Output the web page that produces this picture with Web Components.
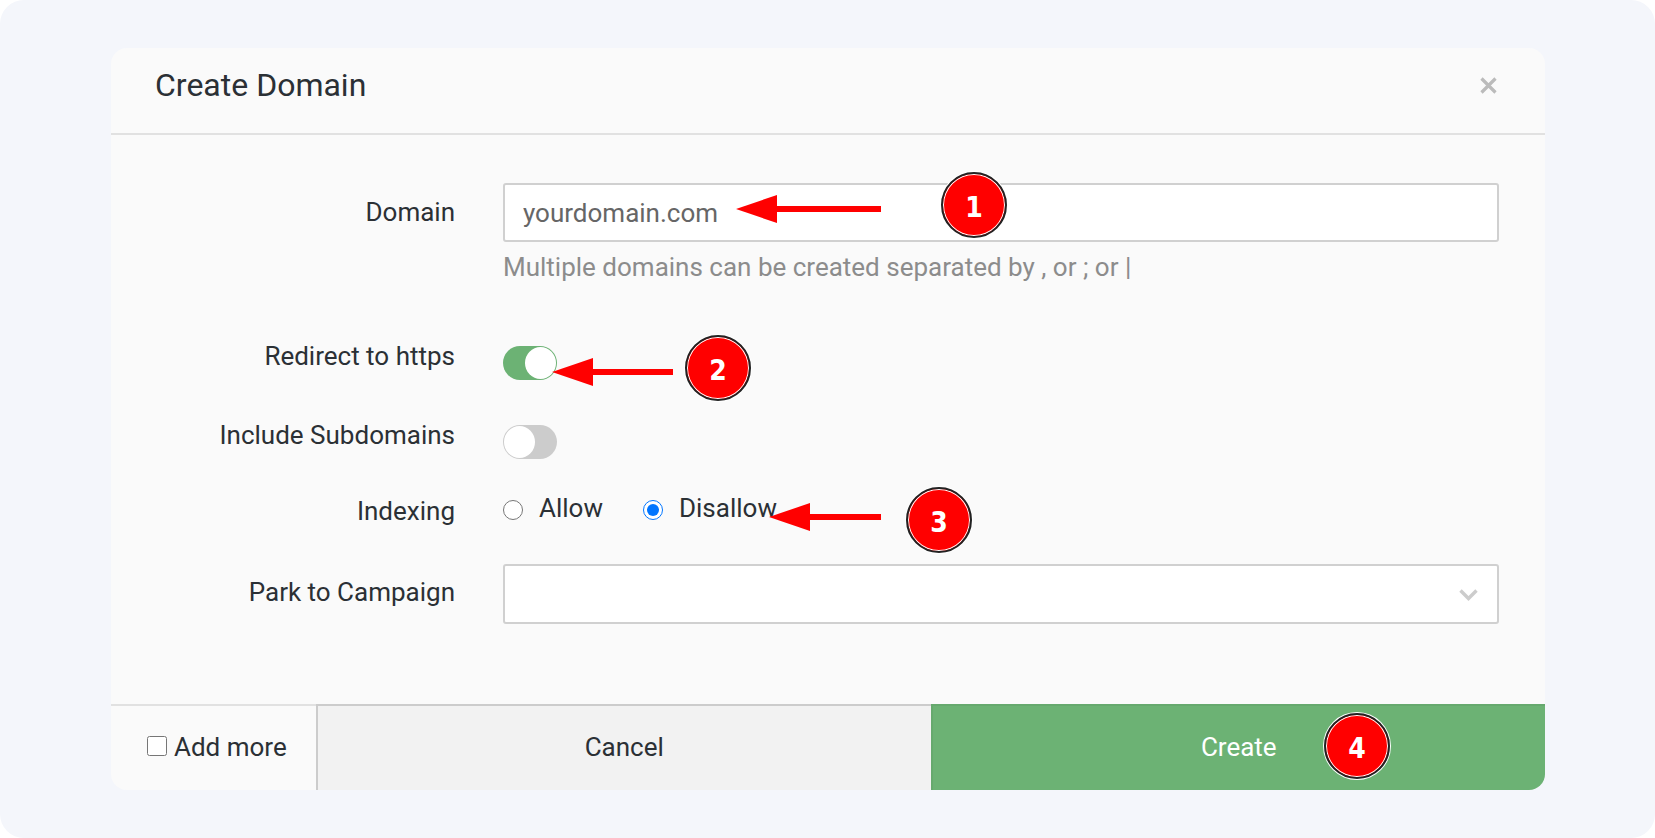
<!DOCTYPE html>
<html lang="en">
<head>
<meta charset="utf-8">
<meta name="viewport" content="width=device-width, initial-scale=1">
<title>Create Domain</title>
<style>
  body {
    margin: 0;
    background: #fff;
    color: #2b3035;
    font: 26px/28px Roboto, sans-serif;
  }
</style>
</head>
<body>
<domain-page></domain-page>

<script>
const define = (name, html) => {
  const template = document.createElement('template');
  template.innerHTML = html;

  customElements.define(name, class extends HTMLElement {
    constructor() {
      super();
      this.attachShadow({ mode: 'open' }).append(template.content.cloneNode(true));
    }
  });
};

define('callout-badge', `
  <style>
    :host {
      position: absolute;
      z-index: 2;
      display: flex;
      align-items: center;
      justify-content: center;
      box-sizing: border-box;
      width: 66px;
      height: 66px;
      padding-top: 5px;
      border: 2px solid #222;
      border-radius: 50%;
      background: #f00;
      box-shadow: inset 0 0 0 1px #fff, 0 0 0 1px #fff;
      color: #fff;
      font: bold 28px/28px "DejaVu Sans Condensed", "DejaVu Sans", sans-serif;
      pointer-events: none;
    }
  </style>
  <slot></slot>
`);

define('callout-arrow', `
  <style>
    :host {
      position: absolute;
      z-index: 2;
      display: flex;
      align-items: center;
      height: 28px;
      pointer-events: none;
    }
    svg { flex: none; width: 41px; height: 28px; }
    .line { flex: 1; height: 6px; background: #f00; }
  </style>
  <svg viewBox="0 0 41 28" aria-hidden="true"><path d="M0 14 41 0v28z" fill="#f00"/></svg>
  <div class="line"></div>
`);

define('modal-dialog', `
  <style>
    :host {
      display: flex;
      flex-direction: column;
      overflow: hidden;
      border-radius: 16px;
      background: #fafafa;
    }
    header {
      display: flex;
      align-items: flex-start;
      justify-content: space-between;
      padding: 19px 48px 30px 44px;
      border-bottom: 2px solid #e1e1e1;
    }
    .close {
      display: flex;
      margin: 10px 0 0;
      padding: 0;
      border: 0;
      background: none;
      cursor: pointer;
    }
    .body { padding: 48px 46px 80px 0; }
    footer { display: flex; }
  </style>
  <header>
    <slot name="title"></slot>
    <button class="close" type="button" aria-label="Close">
      <svg width="17" height="17" viewBox="0 0 17 17" aria-hidden="true">
        <path d="M1.5 1.5l14 14M15.5 1.5l-14 14" stroke="#bbb" stroke-width="3.2"/>
      </svg>
    </button>
  </header>
  <div class="body"><slot></slot></div>
  <footer><slot name="footer"></slot></footer>
`);

define('form-row', `
  <style>
    :host {
      display: grid;
      grid-template-columns: 344px 1fr;
      column-gap: 48px;
    }
    .label { padding-top: var(--label-top, 0); text-align: right; }
    .control { position: relative; min-width: 0; }
  </style>
  <div class="label"><slot name="label"></slot></div>
  <div class="control"><slot></slot></div>
`);

define('domain-page', `
  <style>
    :host {
      display: block;
      box-sizing: border-box;
      min-height: 100vh;
      padding: 48px 110px 48px 111px;
      border-radius: 24px;
      background: #f4f6fb;
    }
    h1 { margin: 0; font-size: 32px; line-height: 36px; font-weight: 400; }
    input { margin: 0; }

    .text, select {
      display: block;
      box-sizing: border-box;
      width: 100%;
      height: 60px;
      padding: 0 18px;
      border: 2px solid #d0d0d0;
      border-radius: 3px;
      background: #fff;
      color: #666;
      font: inherit;
      appearance: none;
    }
    .text { height: 59px; }
    .hint { margin: 11px 0 0; color: #8c8c8c; }
    .chevron { position: absolute; right: 21px; top: 25px; pointer-events: none; }

    .tall { --label-top: 15px; }
    .https { margin-top: 61px; }
    .subdomains { margin-top: 41px; }
    .indexing { --label-top: 3px; margin-top: 35px; }
    .park { --label-top: 14px; margin-top: 39px; }

    .toggle {
      display: block;
      width: 54px;
      height: 34px;
      margin-top: 4px;
      border-radius: 17px;
      background: #ccc;
      appearance: none;
      cursor: pointer;
    }
    .toggle::before {
      content: "";
      display: block;
      width: 31px;
      height: 32px;
      margin: 1px;
      border-radius: 50%;
      background: #fff;
      float: left;
    }
    .toggle:checked { background: #6cb274; }
    .toggle:checked::before { float: right; }

    .options { display: flex; gap: 40px; }
    .options label { display: flex; gap: 16px; }
    .options input { width: 20px; height: 20px; margin-top: 6px; }

    .more {
      display: flex;
      align-items: center;
      gap: 7px;
      box-sizing: border-box;
      width: 205px;
      padding: 0 0 3px 36px;
      border-top: 2px solid #e1e1e1;
    }
    .more input { width: 20px; height: 20px; margin-bottom: 2px; }
    .action {
      position: relative;
      flex: 1;
      height: 86px;
      padding: 0 0 3px;
      border: 0 solid #ccc;
      border-width: 2px 0 0 2px;
      background: #f2f2f2;
      color: inherit;
      font: inherit;
      cursor: pointer;
    }
    .create { border-color: #66a96e; background: #6cb274; color: #fff; }
  </style>

  <modal-dialog role="dialog" aria-labelledby="title">
    <h1 slot="title" id="title">Create Domain</h1>

    <form-row class="tall">
      <label slot="label" for="domain">Domain</label>
      <input class="text" id="domain" type="text" value="yourdomain.com">
      <p class="hint">Multiple domains can be created separated by , or ; or |</p>
      <callout-arrow style="left: 233px; top: 12px; width: 145px"></callout-arrow>
      <callout-badge style="left: 438px; top: -11px">1</callout-badge>
    </form-row>

    <form-row class="https">
      <label slot="label" for="https">Redirect to https</label>
      <input class="toggle" id="https" type="checkbox" checked>
      <callout-arrow style="left: 49px; top: 16px; width: 121px"></callout-arrow>
      <callout-badge style="left: 182px; top: -7px">2</callout-badge>
    </form-row>

    <form-row class="subdomains">
      <label slot="label" for="subdomains">Include Subdomains</label>
      <input class="toggle" id="subdomains" type="checkbox">
    </form-row>

    <form-row class="indexing">
      <span slot="label" id="indexing">Indexing</span>
      <div class="options" role="radiogroup" aria-labelledby="indexing">
        <label><input type="radio" name="indexing">Allow</label>
        <label><input type="radio" name="indexing" checked>Disallow</label>
      </div>
      <callout-arrow style="left: 266px; top: 9px; width: 112px"></callout-arrow>
      <callout-badge style="left: 403px; top: -7px">3</callout-badge>
    </form-row>

    <form-row class="park">
      <label slot="label" for="campaign">Park to Campaign</label>
      <select id="campaign"><option></option></select>
      <svg class="chevron" width="19" height="12" viewBox="0 0 19 12" aria-hidden="true">
        <path d="M1.5 1.5l8 8 8-8" fill="none" stroke="#ccc" stroke-width="3.4"/>
      </svg>
    </form-row>

    <label slot="footer" class="more"><input type="checkbox">Add more</label>
    <button slot="footer" class="action" type="button">Cancel</button>
    <button slot="footer" class="action create" type="button">
      Create
      <callout-badge style="right: 155px; top: 7px">4</callout-badge>
    </button>
  </modal-dialog>
`);
</script>
</body>
</html>
